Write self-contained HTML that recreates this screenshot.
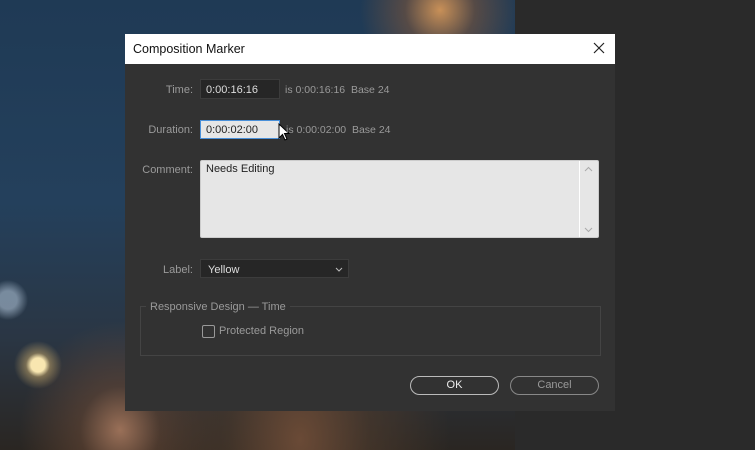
<!DOCTYPE html>
<html><head><style>
body{margin:0;width:755px;height:450px;overflow:hidden;position:relative;font-family:"Liberation Sans",sans-serif;background:#2a2a2a}
.photo{position:absolute;left:0;top:0;width:515px;height:450px;background:
radial-gradient(circle at 38px 365px,#f8e6b0 0 7px,rgba(240,200,120,.4) 12px,transparent 24px),
radial-gradient(circle at 8px 300px,rgba(200,220,240,.5) 0 9px,transparent 20px),
radial-gradient(ellipse at 440px 10px,#c89058 0,rgba(140,90,55,.5) 35px,transparent 80px),
radial-gradient(ellipse at 300px 440px,#6a4a36 0,rgba(80,60,45,.6) 70px,transparent 150px),
radial-gradient(ellipse at 120px 430px,#9a7058 0,rgba(110,75,55,.5) 40px,transparent 100px),
linear-gradient(180deg,#1f3a55 0%,#24405c 45%,#2a3644 75%,#2a2622 100%)}
.dlg{position:absolute;left:125px;top:34px;width:490px;height:377px;background:#323232}
.title{height:30px;background:#fff;color:#111;font-size:12.5px;line-height:30px;padding-left:8px;position:relative}
.x{position:absolute;right:9px;top:7px}
.lbl{position:absolute;color:#9a9a9a;font-size:11px;text-align:right;width:70px}
.box{position:absolute;font-size:11px;box-sizing:border-box}
.t{position:absolute;color:#9a9a9a;font-size:10.5px}
.btn{position:absolute;top:342px;width:89px;height:19px;border:1px solid #bbb;border-radius:10px;box-sizing:border-box;font-size:11px;text-align:center;line-height:17px}
</style></head><body>
<div class="photo"></div>
<div class="dlg">
<div class="title">Composition Marker
<svg class="x" width="14" height="14" viewBox="0 0 14 14"><path d="M2 2L12 12M12 2L2 12" stroke="#222" stroke-width="1.2"/></svg></div>
<div class="lbl" style="left:-2px;top:50px">Time:</div>
<div class="box" style="left:75px;top:45px;width:80px;height:20px;background:#262626;border:1px solid #3c3c3c;color:#ddd;padding:4px 5px">0:00:16:16</div>
<div class="t" style="left:160px;top:50px">is 0:00:16:16 &nbsp;Base 24</div>
<div class="lbl" style="left:-2px;top:90px">Duration:</div>
<div class="box" style="left:75px;top:86px;width:80px;height:19px;background:#e6e6e6;border:1px solid #4a90d9;color:#222;padding:3px 5px">0:00:02:00</div>
<svg style="position:absolute;left:153px;top:89px" width="12" height="18" viewBox="0 0 12 18"><path d="M1 1V15L4.5 11.5L7 17L9 16L6.5 10.5H11Z" fill="#fff" stroke="#000" stroke-width="1"/></svg>
<div class="t" style="left:161px;top:90px">is 0:00:02:00 &nbsp;Base 24</div>
<div class="lbl" style="left:-2px;top:130px">Comment:</div>
<div class="box" style="left:75px;top:126px;width:399px;height:78px;background:#e6e6e6;border:1px solid #ccc;border-radius:2px;color:#222;padding:2px 5px">Needs Editing
<svg style="position:absolute;right:0;top:0" width="19" height="76" viewBox="0 0 19 76"><path d="M0.5 0V76" stroke="#fff"/><path d="M6 10L9.5 6.5L13 10M6 67L9.5 70.5L13 67" stroke="#aaa" fill="none"/></svg></div>
<div class="lbl" style="left:-2px;top:230px">Label:</div>
<div class="box" style="left:75px;top:225px;width:149px;height:19px;background:#262626;border:1px solid #3c3c3c;color:#ddd;padding:4px 7px">Yellow
<svg style="position:absolute;right:5px;top:7px" width="8" height="5" viewBox="0 0 8 5"><path d="M1 1L4 4L7 1" stroke="#bbb" fill="none"/></svg></div>
<div style="position:absolute;left:15px;top:272px;width:459px;height:48px;border:1px solid #444"></div>
<div class="t" style="left:21px;top:267px;background:#323232;padding:0 4px;font-size:11px">Responsive Design — Time</div>
<div style="position:absolute;left:77px;top:291px;width:11px;height:11px;border:1px solid #999;border-radius:2px"></div>
<div class="t" style="left:94px;top:291px;font-size:11px">Protected Region</div>
<div class="btn" style="left:285px;color:#eee">OK</div>
<div class="btn" style="left:385px;color:#999;border-color:#888">Cancel</div>
</div>
</body></html>
